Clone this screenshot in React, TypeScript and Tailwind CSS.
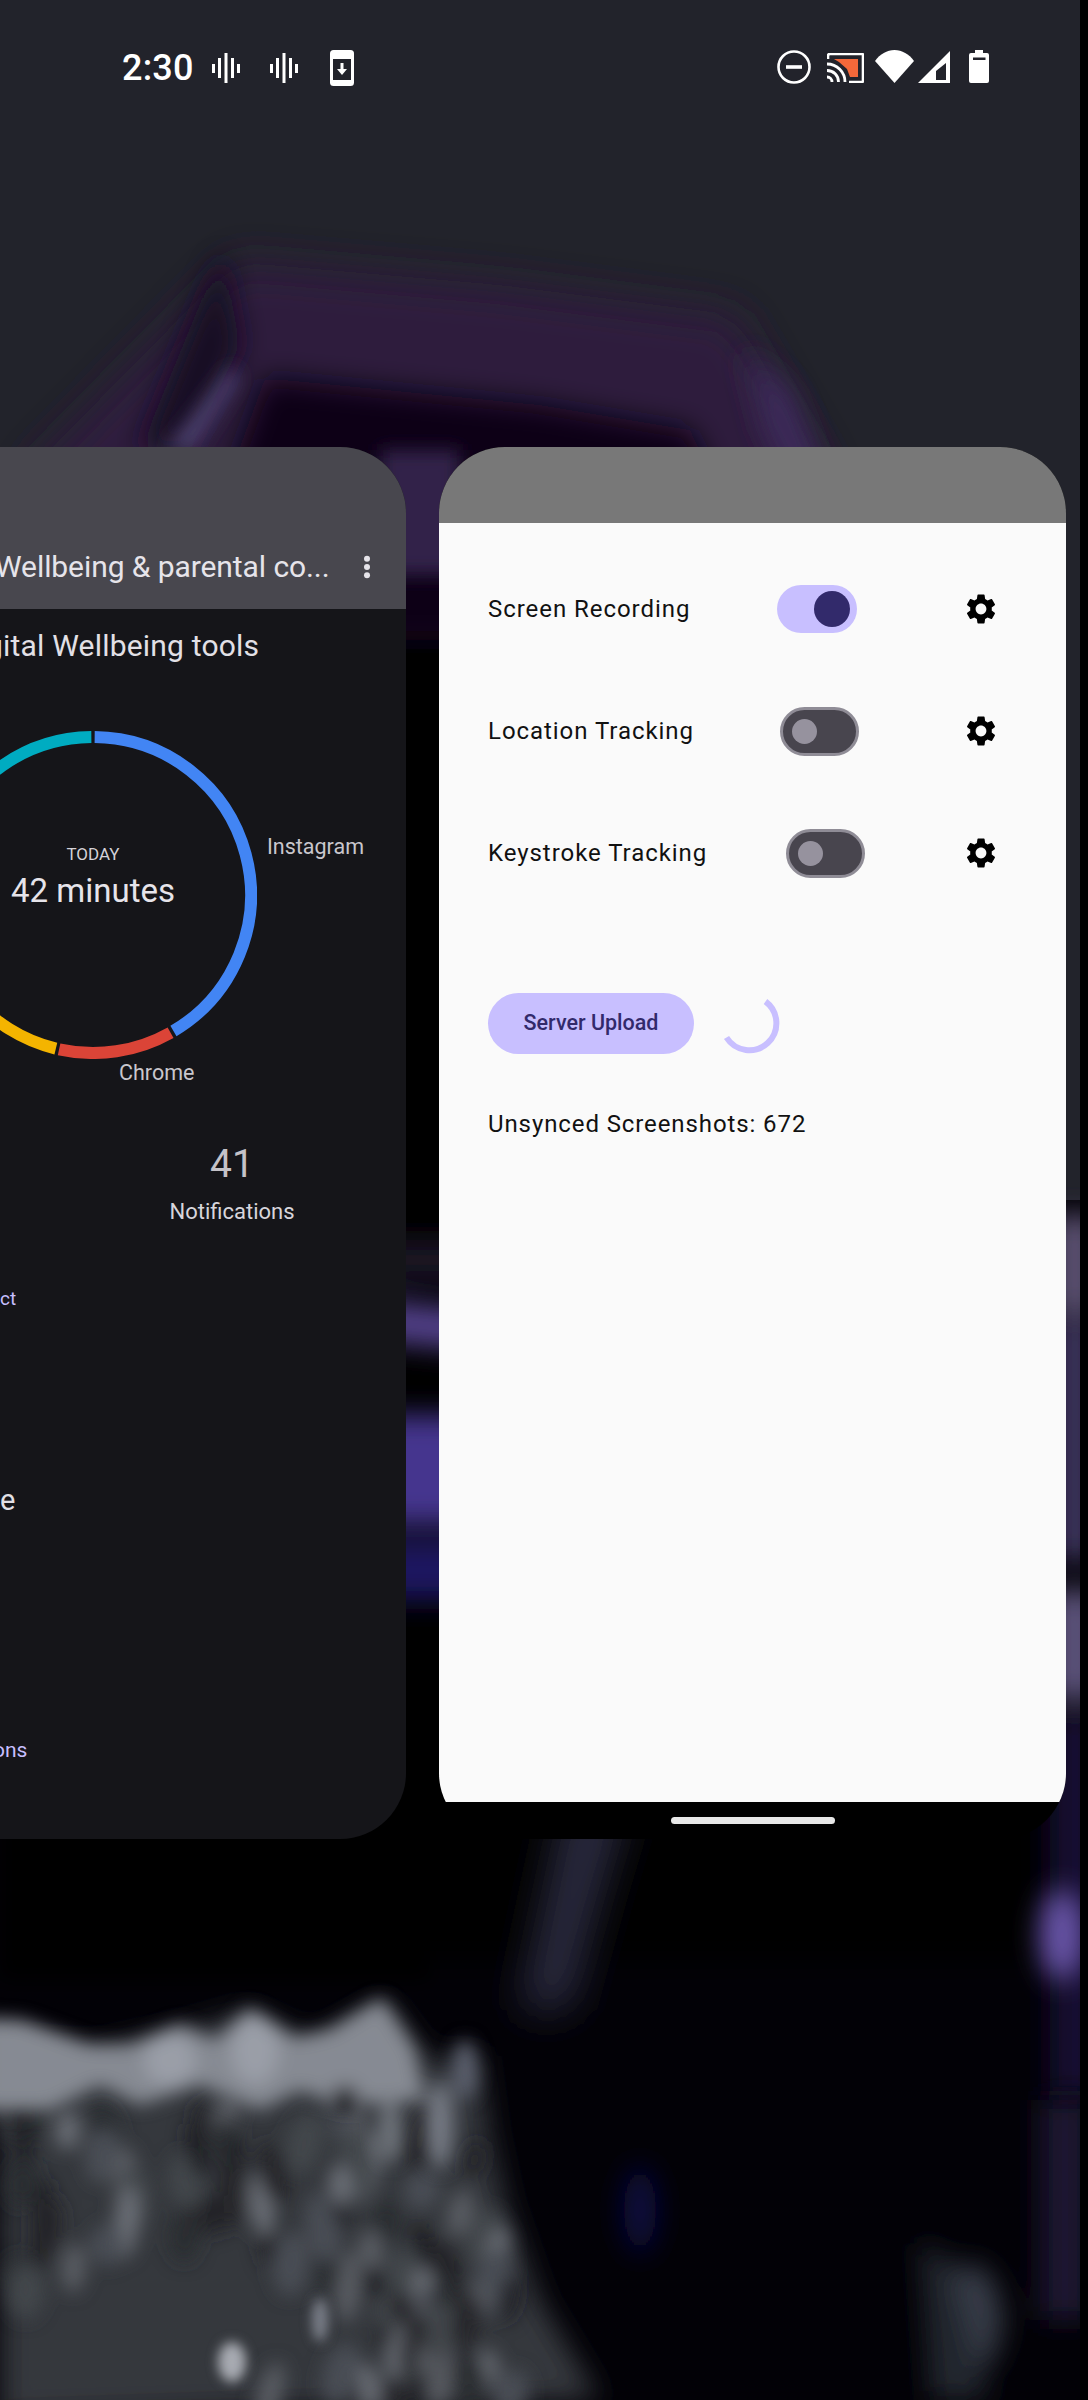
const sans = "font-['Roboto',sans-serif]"

const rockTones = ['#222326', '#5a5d64', '#26272a', '#4a4d54', '#1e1f22', '#6a6e76', '#2c2d31', '#43464c']

// mottled grey lumps of the rock, spread by a fixed step so the picture never changes
const rockBlobs = Array.from({ length: 90 }, (_, i) => {
  const y = 2105 + ((i * 53) % 295)
  const limit = 470 + (y - 2105) * 0.3
  return {
    x: (i * 97) % limit,
    y,
    rx: 9 + (i % 4) * 3,
    ry: 20 + (i % 5) * 4,
    tilt: -14 + (i % 6) * 6,
    fill: rockTones[i % rockTones.length],
  }
})

// blurred home screen picture behind the recents cards
function Wallpaper() {
  return (
    <svg className="absolute inset-0" width="1080" height="2400" viewBox="0 0 1080 2400">
      <defs>
        <filter id="b6" x="-60%" y="-60%" width="220%" height="220%"><feGaussianBlur stdDeviation="6" /></filter>
        <filter id="b9" x="-60%" y="-60%" width="220%" height="220%"><feGaussianBlur stdDeviation="9" /></filter>
        <filter id="b14" x="-60%" y="-60%" width="220%" height="220%"><feGaussianBlur stdDeviation="14" /></filter>
        <filter id="b20" x="-60%" y="-60%" width="220%" height="220%"><feGaussianBlur stdDeviation="20" /></filter>
      </defs>
      <rect width="1080" height="2400" fill="#020106" />
      <rect width="1080" height="1200" fill="#22232b" />
      <rect x="300" y="560" width="740" height="1400" fill="#020106" filter="url(#b14)" />
      <rect x="0" y="580" width="430" height="1400" fill="#020106" filter="url(#b9)" />
      <g filter="url(#b20)">
        <polygon points="235,262 500,285 735,315 825,470 860,620 0,620 30,470" fill="#2f1d3c" />
      </g>
      <g filter="url(#b14)">
        <polygon points="265,378 540,405 690,430 790,640 170,640" fill="#0b0616" />
        <polygon points="222,250 240,345 190,450 140,450" fill="#150c20" />
        <polygon points="745,350 790,390 825,480 790,480 765,430" fill="#3e2c5c" />
      </g>
      <g filter="url(#b9)">
        <polygon points="232,365 240,380 195,450 165,450" fill="#4a3c6a" />
        <rect x="380" y="450" width="80" height="125" fill="#33234a" />
      </g>
      <g filter="url(#b14)">
        <rect x="370" y="1240" width="100" height="40" fill="#1e1828" />
        <polygon points="370,1300 470,1310 470,1350 370,1340" fill="#54428e" />
        <rect x="370" y="1415" width="100" height="110" fill="#44368e" />
        <rect x="370" y="1540" width="100" height="60" fill="#1c1660" />
        <rect x="1050" y="1215" width="50" height="100" fill="#5a4f70" />
        <rect x="1050" y="1320" width="50" height="240" fill="#3a3058" />
        <rect x="1050" y="1590" width="50" height="110" fill="#5d527c" />
        <rect x="1050" y="1715" width="50" height="380" fill="#171033" />
      </g>
      <g filter="url(#b20)">
        <polygon points="565,1800 630,1800 600,1900 570,2010 520,2010" fill="#2c2a40" />
      </g>
      <g filter="url(#b14)">
        <ellipse cx="1062" cy="1935" rx="22" ry="46" fill="#6a56aa" />
        <ellipse cx="640" cy="2210" rx="16" ry="44" fill="#100a44" />
        <ellipse cx="970" cy="2320" rx="32" ry="56" fill="#383c48" />
        <polygon points="920,2240 950,2260 990,2400 930,2400" fill="#23262e" />
        <rect x="1040" y="2100" width="50" height="220" fill="#1a1432" />
        <polygon points="0,2040 90,2050 180,2030 250,2010 310,2040 385,2000 430,2060 480,2055 490,2130 505,2200 540,2300 600,2400 0,2420" fill="#36383d" />
      </g>
      <g filter="url(#b9)">
        {rockBlobs.map((b, i) => (
          <ellipse key={i} cx={b.x} cy={b.y} rx={b.rx} ry={b.ry} fill={b.fill} transform={`rotate(${b.tilt} ${b.x} ${b.y})`} />
        ))}
      </g>
      <g filter="url(#b9)">
        <polygon points="-20,2018 22,2020 90,2045 130,2045 180,2024 215,2040 250,2008 295,2038 330,2030 382,1998 415,2050 425,2100 340,2105 300,2090 260,2110 200,2085 140,2105 100,2085 50,2110 -20,2110" fill="#868a93" />
        <ellipse cx="170" cy="2060" rx="26" ry="26" fill="#9a9ea7" />
        <ellipse cx="255" cy="2050" rx="24" ry="34" fill="#9a9ea7" />
        <ellipse cx="465" cy="2070" rx="12" ry="30" fill="#5d6270" />
        <ellipse cx="440" cy="2125" rx="14" ry="44" fill="#767a84" />
        <ellipse cx="390" cy="2130" rx="12" ry="32" fill="#70747c" />
        <ellipse cx="345" cy="2100" rx="14" ry="14" fill="#26272a" />
      </g>
      <g filter="url(#b6)">
        <ellipse cx="232" cy="2362" rx="14" ry="20" fill="#a8abb2" />
        <ellipse cx="320" cy="2320" rx="8" ry="22" fill="#7c808a" />
      </g>
    </svg>
  )
}

function Wave({ className }: { className?: string }) {
  return (
    <svg className={className} width="28" height="30" viewBox="0 0 28 30" fill="#fff">
      <rect x="0" y="11" width="3" height="9" />
      <rect x="6" y="5" width="3" height="20" />
      <rect x="12.5" y="0" width="3" height="30" />
      <rect x="19" y="5" width="3" height="20" />
      <rect x="25" y="11" width="3" height="9" />
    </svg>
  )
}

function StatusBar() {
  return (
    <div className="relative flex h-[134px] items-start pt-[50px] text-white">
      <div className={`ml-[122px] w-[76px] h-[36px] leading-[36px] whitespace-nowrap text-[36px] font-medium tracking-[0.2px] ${sans}`}>2:30</div>
      <Wave className="ml-[14px] mt-[3px]" />
      <Wave className="ml-[30px] mt-[3px]" />
      <svg className="ml-[32px]" width="24" height="36" viewBox="0 0 24 36">
        <rect width="24" height="36" rx="3.5" fill="#fff" />
        <rect x="3" y="9" width="18" height="21" fill="#22232b" />
        <path d="M10.5 13h3v6h3.5L12 25l-5-6h3.5z" fill="#fff" />
      </svg>
      <svg className="ml-[423px]" width="34" height="34" viewBox="0 0 34 34">
        <circle cx="17" cy="17" r="15.5" fill="none" stroke="#fff" strokeWidth="2.6" />
        <rect x="9" y="15.2" width="16" height="3.6" fill="#fff" />
      </svg>
      <svg className="ml-[16px] mt-[3px]" width="37" height="30" viewBox="0 0 37 30">
        <path d="M1 6V3a2 2 0 0 1 2-2h32a1 1 0 0 1 1 1v26a1 1 0 0 1-1 1H22" fill="none" stroke="#fff" strokeWidth="2.6" />
        <polygon points="7,6 31,6 31,24 23,24 20,16 12,9" fill="#f4683a" />
        <path d="M0 11c10 0 18 8 18 18M0 17.5c6.500 0 11.500 5 11.500 11.500M0 24c3 0 5 2 5 5" fill="none" stroke="#fff" strokeWidth="2.8" />
      </svg>
      <svg className="ml-[11px]" width="39" height="33" viewBox="0 0 39 33">
        <path d="M0 11C5 4 12 0 19.500 0S34 4 39 11L19.500 33z" fill="#fff" />
      </svg>
      <svg className="ml-[4px] mt-[1px]" width="32" height="32" viewBox="0 0 32 32">
        <path d="M32 0v32H0z" fill="#fff" />
        <polygon points="18,20 28,12 28,29 18,29" fill="#22232b" />
      </svg>
      <svg className="ml-[19px]" width="20" height="33" viewBox="0 0 20 33">
        <path d="M6 0h8v3h4a2 2 0 0 1 2 2v26a2 2 0 0 1-2 2H2a2 2 0 0 1-2-2V5a2 2 0 0 1 2-2h4z" fill="#fff" />
        <rect x="4" y="7.500" width="12.500" height="2.500" fill="#22232b" />
      </svg>
    </div>
  )
}

function polar(r: number, deg: number) {
  const a = ((deg - 90) * Math.PI) / 180
  return `${164 + r * Math.cos(a)} ${164 + r * Math.sin(a)}`
}

function arc(from: number, to: number) {
  const large = to - from > 180 ? 1 : 0
  return `M${polar(158, from)}A158 158 0 ${large} 1 ${polar(158, to)}`
}

function Ring() {
  return (
    <svg className="-ml-[71px] shrink-0" width="328" height="328" viewBox="0 0 328 328" fill="none" strokeWidth="12">
      <path d={arc(0.6, 149.4)} stroke="#4285f4" />
      <path d={arc(150.6, 192.4)} stroke="#db4437" />
      <path d={arc(193.6, 270)} stroke="#f4b400" />
      <path d={arc(290, 359.4)} stroke="#00acc1" />
    </svg>
  )
}

function WellbeingCard() {
  return (
    <div className={`w-[406px] h-[1392px] shrink-0 overflow-hidden rounded-r-[66px] bg-[#151519] ${sans}`}>
      <div className="relative h-[162px] bg-[#48474e] pt-[100px]">
        <div className="-ml-[5px] w-[345px] h-[40px] leading-[40px] whitespace-nowrap text-[30px] tracking-[-0.08px] text-[#e6e4ea]">Wellbeing &amp; parental co...</div>
        <svg className="absolute left-[361px] top-[107px]" width="12" height="26" viewBox="0 0 14 26" fill="#e6e4ea">
          <circle cx="7" cy="3.500" r="3.500" />
          <circle cx="7" cy="13" r="3.500" />
          <circle cx="7" cy="22.500" r="3.500" />
        </svg>
      </div>
      <div className="-ml-[14px] mt-[17px] h-[40px] leading-[40px] whitespace-nowrap text-[30px] tracking-[0.2px] text-[#e2e0e6]">gital Wellbeing tools</div>
      <div className="relative mt-[65px] flex h-[328px]">
        <Ring />
        <div className="absolute left-[0px] top-[112px] flex w-[186px] flex-col items-center">
          <div className="h-[22px] leading-[22px] text-[17px] text-[#d4d2d8]">TODAY</div>
          <div className="mt-[6px] h-[40px] leading-[40px] whitespace-nowrap text-[33px] text-[#e6e4ea]">42 minutes</div>
        </div>
        <div className="absolute left-[267px] top-[102px] h-[28px] leading-[28px] text-[21.500px] text-[#c9c7cd]">Instagram</div>
        <div className="absolute left-[119px] top-[328px] h-[28px] leading-[28px] text-[21.500px] text-[#c9c7cd]">Chrome</div>
      </div>
      <div className="ml-[112px] mt-[81px] flex w-[240px] flex-col items-center">
        <div className="h-[48px] leading-[48px] text-[39px] text-[#c4c2c8]">41</div>
        <div className="mt-[10px] h-[28px] leading-[28px] text-[22px] text-[#d8d6dc]">Notifications</div>
      </div>
      <div className="mt-[61px] h-[24px] leading-[24px] text-[19px] text-[#c8bfff]">ct</div>
      <div className="mt-[169px] h-[40px] leading-[40px] text-[29px] text-[#e2e0e6]">e</div>
      <div className="mt-[217px] h-[26px] leading-[26px] -ml-[7px] text-[21px] text-[#c8bfff]">ons</div>
    </div>
  )
}

const rows = [
  { label: 'Screen Recording', on: true, offset: 'ml-[0px]' },
  { label: 'Location Tracking', on: false, offset: 'ml-[3px]' },
  { label: 'Keystroke Tracking', on: false, offset: 'ml-[9px]' },
]

function Toggle({ on, offset }: { on: boolean; offset: string }) {
  if (on) {
    return (
      <div className={`flex h-[48px] w-[80px] items-center justify-end rounded-full bg-[#c8bfff] pr-[7px] ${offset}`}>
        <div className="h-[36px] w-[36px] rounded-full bg-[#322a6b]" />
      </div>
    )
  }
  return (
    <div className={`flex h-[49px] w-[79px] items-center rounded-full border-[3px] border-[#8f8c96] bg-[#48454e] pl-[9px] ${offset}`}>
      <div className="h-[25px] w-[25px] rounded-full bg-[#96929e]" />
    </div>
  )
}

function Gear() {
  return (
    <svg width="36" height="36" viewBox="0 0 24 24" fill="#000">
      <path d="M19.14 12.94c.04-.3.06-.61.06-.94 0-.32-.02-.64-.07-.94l2.03-1.58a.49.49 0 0 0 .12-.61l-1.92-3.32a.488.488 0 0 0-.59-.22l-2.39.96c-.5-.38-1.03-.7-1.62-.94l-.36-2.54a.484.484 0 0 0-.48-.41h-3.84c-.24 0-.43.17-.47.41l-.36 2.54c-.59.24-1.13.57-1.62.94l-2.39-.96c-.22-.08-.47 0-.59.22L2.74 8.87c-.12.21-.08.47.12.61l2.03 1.58c-.05.3-.09.63-.09.94s.02.64.07.94l-2.03 1.58a.49.49 0 0 0-.12.61l1.92 3.32c.12.22.37.29.59.22l2.39-.96c.5.38 1.03.7 1.62.94l.36 2.54c.05.24.24.41.48.41h3.84c.24 0 .44-.17.47-.41l.36-2.54c.59-.24 1.13-.56 1.62-.94l2.39.96c.22.08.47 0 .59-.22l1.92-3.32c.12-.22.07-.47-.12-.61l-2.01-1.58zM12 15.6c-1.98 0-3.6-1.62-3.6-3.6s1.62-3.6 3.6-3.6 3.6 1.62 3.6 3.6-1.62 3.6-3.6 3.6z" />
    </svg>
  )
}

function TrackerCard() {
  return (
    <div className={`ml-[33px] flex h-[1392px] w-[627px] shrink-0 flex-col overflow-hidden rounded-[66px] bg-black ${sans}`}>
      <div className="h-[76px] bg-[#787878]" />
      <div className="flex-1 bg-[#fafafa] pl-[49px] pt-[25px]">
        {rows.map((r) => (
          <div key={r.label} className="flex h-[122px] items-center pr-[67px]">
            <div className="w-[289px] whitespace-nowrap text-[24px] tracking-[0.95px] text-[#111]">{r.label}</div>
            <Toggle on={r.on} offset={r.offset} />
            <div className="ml-auto"><Gear /></div>
          </div>
        ))}
        <div className="mt-[79px] flex items-center">
          <div className="flex h-[61px] w-[206px] items-center justify-center rounded-full bg-[#c8bfff] text-[21.500px] font-medium text-[#322a6b]">Server Upload</div>
          <svg className="ml-[26px]" width="60" height="60" viewBox="0 0 60 60" fill="none">
            <path d="M45.500 7.500A27 27 0 1 1 6.500 43.500" stroke="#c8bfff" strokeWidth="6" />
          </svg>
        </div>
        <div className="mt-[54px] h-[32px] leading-[32px] whitespace-nowrap text-[24px] tracking-[0.9px] text-[#111]">Unsynced Screenshots: 672</div>
      </div>
      <div className="flex h-[37px] justify-center pt-[15px]">
        <div className="h-[7px] w-[164px] rounded-full bg-[#e8e8e8]" />
      </div>
    </div>
  )
}

export default function App() {
  return (
    <div className="h-[2400px] w-[1088px] overflow-hidden bg-black">
      <div className="relative h-[2400px] w-[1080px] overflow-hidden">
        <Wallpaper />
        <StatusBar />
        <div className="relative mt-[313px] flex">
          <WellbeingCard />
          <TrackerCard />
        </div>
      </div>
    </div>
  )
}
